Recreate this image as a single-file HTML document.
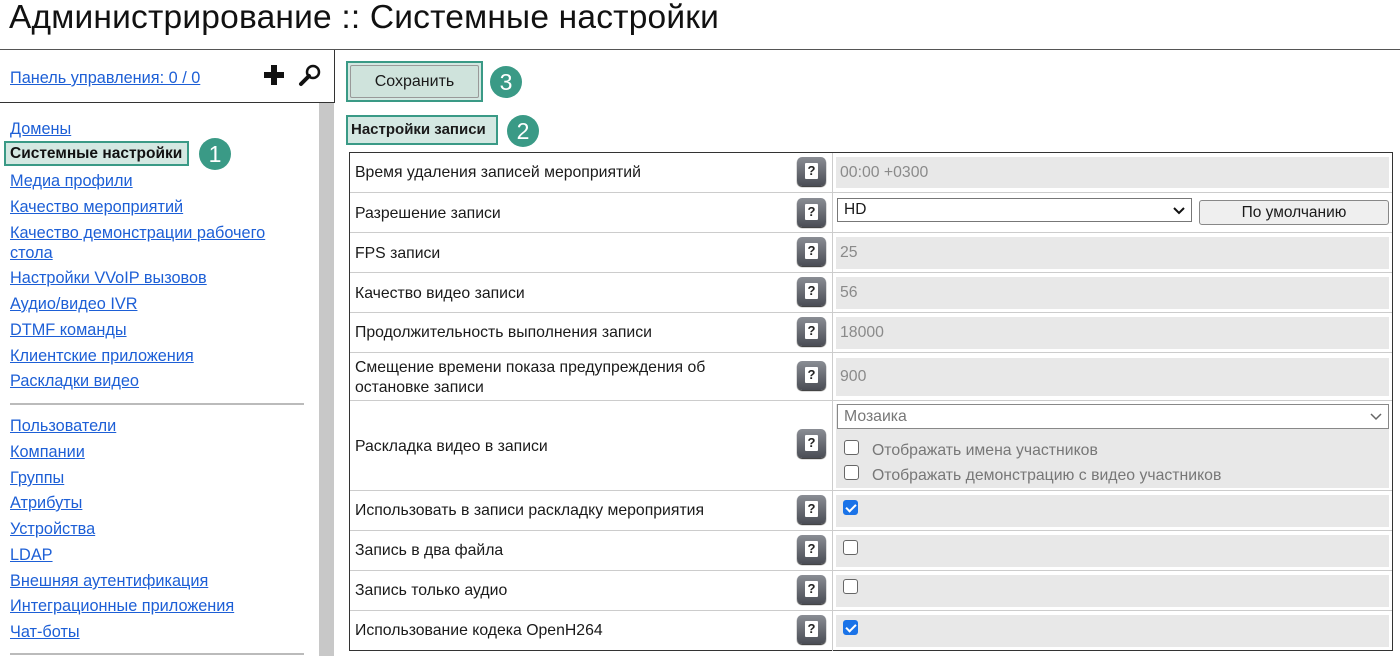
<!DOCTYPE html>
<html><head><meta charset="utf-8"><style>
*{margin:0;padding:0;box-sizing:border-box}
body{width:1400px;height:656px;overflow:hidden;background:#fff;font-family:"Liberation Sans","DejaVu Sans",sans-serif;color:#1a1a1a;position:relative}
.abs{position:absolute}
h1{position:absolute;left:9px;top:-1px;font-size:33.5px;font-weight:normal;color:#111;letter-spacing:0.2px}
a{color:#1d5fd6;text-decoration:underline;font-size:16.3px;white-space:nowrap}
.nav a{position:absolute;left:10px}
.circ{position:absolute;width:32px;height:32px;border-radius:50%;background:#3a9a86;color:#fff;font-size:23px;text-align:center;line-height:32px}
.row{position:absolute;left:350px;width:1042px;border-top:1px solid #ccc}
.lbl{position:absolute;left:5px;font-size:15.8px;line-height:20px}
.q{position:absolute;left:447px;width:29px;height:29px;border-radius:5px;background:linear-gradient(#8a8d94,#4a4d55);box-shadow:0 1px 1px #222}
.q:after{content:"?";position:absolute;left:8px;top:6px;width:13px;height:16px;background:#fff;color:#222;font-size:13px;font-weight:bold;text-align:center;line-height:16px;border-radius:1px}
.vl{position:absolute;left:482px;width:1px;background:#ccc}
.inp{position:absolute;left:486px;width:553px;background:#e8e8e8;color:#8a8a8a;font-size:15.8px;padding-left:4px}
.cb{position:absolute;width:15px;height:15px;border:1px solid #666;border-radius:3px;background:#fff}
.cb.on{background:#1a73e8;border-color:#1a73e8}
.cb.on:after{content:"";position:absolute;left:4px;top:1px;width:4px;height:8px;border:solid #fff;border-width:0 2px 2px 0;transform:rotate(45deg)}
</style></head><body>
<h1>Администрирование :: Системные настройки</h1>
<div class="abs" style="left:0;top:49px;width:1400px;height:1px;background:#555"></div>
<div class="abs" style="left:0;top:50px;width:335px;height:53px;border-right:1px solid #333;border-bottom:1px solid #333"></div>
<a class="abs" style="left:10px;top:69px">Панель управления: 0 / 0</a>
<svg class="abs" style="left:263px;top:64px" width="22" height="22"><path d="M8 1h6v7h7v6h-7v7H8v-7H1V8h7z" fill="#111"/></svg>
<svg class="abs" style="left:298px;top:63px" width="24" height="24"><circle cx="15" cy="9" r="6" fill="none" stroke="#111" stroke-width="2.5"/><path d="M11 13L3 21" stroke="#111" stroke-width="4" stroke-linecap="round"/></svg>
<div class="abs" style="left:319px;top:103px;width:15px;height:553px;background:#c8c8c8"></div>
<div class="nav">
<a style="top:120px">Домены</a>
<div class="abs" style="left:4px;top:141px;width:185px;height:25px;background:#d4e8e2;border:2px solid #3a9a86"></div>
<span class="abs" style="left:10px;top:145px;font-size:15.5px;font-weight:bold;color:#111">Системные настройки</span>
<a style="top:172px">Медиа профили</a>
<a style="top:198px">Качество мероприятий</a>
<a style="top:224px">Качество демонстрации рабочего</a>
<a style="top:244px">стола</a>
<a style="top:269px">Настройки VVoIP вызовов</a>
<a style="top:295px">Аудио/видео IVR</a>
<a style="top:321px">DTMF команды</a>
<a style="top:347px">Клиентские приложения</a>
<a style="top:372px">Раскладки видео</a>
<div class="abs" style="left:10px;top:403px;width:294px;height:2px;background:#bbb"></div>
<a style="top:417px">Пользователи</a>
<a style="top:443px">Компании</a>
<a style="top:469px">Группы</a>
<a style="top:494px">Атрибуты</a>
<a style="top:520px">Устройства</a>
<a style="top:546px">LDAP</a>
<a style="top:572px">Внешняя аутентификация</a>
<a style="top:597px">Интеграционные приложения</a>
<a style="top:623px">Чат-боты</a>
<div class="abs" style="left:10px;top:653px;width:294px;height:2px;background:#bbb"></div>
</div>
<div class="circ" style="left:199px;top:138px">1</div>
<div class="abs" style="left:346px;top:61px;width:137px;height:41px;border:2px solid #3a9a86;background:#d4e8e2"></div>
<div class="abs" style="left:350px;top:65px;width:129px;height:33px;border:1px solid #999;border-radius:2px;background:#cfe3dc;font-size:16px;text-align:center;line-height:32px">Сохранить</div>
<div class="circ" style="left:490px;top:66px">3</div>
<div class="abs" style="left:346px;top:115px;width:152px;height:30px;border:2px solid #3a9a86;background:#d4e8e2;font-size:15px;font-weight:bold;line-height:26px;padding-left:3px">Настройки записи</div>
<div class="circ" style="left:507px;top:115px">2</div>
<div class="abs" style="left:349px;top:152px;width:1044px;height:499px;border:1.5px solid #333"></div>

<div class="row" style="top:153px;height:39px;border-top:none"><span class="lbl" style="top:10px">Время удаления записей мероприятий</span><div class="q" style="top:4px"></div><div class="vl" style="top:0;height:39px"></div><div class="inp" style="top:4px;height:31px;line-height:31px">00:00 +0300</div></div>
<div class="row" style="top:192px;height:40px"><span class="lbl" style="top:11px">Разрешение записи</span><div class="q" style="top:5px"></div><div class="vl" style="top:0;height:40px"></div>
<div class="abs" style="left:487px;top:5px;width:355px;height:24px;border:1px solid #777;background:#fff;font-size:15.5px;line-height:22px;padding-left:6px">HD<svg class="abs" style="right:6px;top:7px" width="12" height="9"><path d="M1 2l5 5 5-5" fill="none" stroke="#111" stroke-width="2"/></svg></div>
<div class="abs" style="left:849px;top:7px;width:190px;height:25px;border:1px solid #888;border-radius:3px;background:#efefef;font-size:15.5px;text-align:center;line-height:23px">По умолчанию</div></div>
<div class="row" style="top:232px;height:40px"><span class="lbl" style="top:11px">FPS записи</span><div class="q" style="top:4px"></div><div class="vl" style="top:0;height:40px"></div><div class="inp" style="top:4px;height:32px;line-height:32px">25</div></div>
<div class="row" style="top:272px;height:40px"><span class="lbl" style="top:11px">Качество видео записи</span><div class="q" style="top:4px"></div><div class="vl" style="top:0;height:40px"></div><div class="inp" style="top:4px;height:32px;line-height:32px">56</div></div>
<div class="row" style="top:312px;height:40px"><span class="lbl" style="top:10px">Продолжительность выполнения записи</span><div class="q" style="top:4px"></div><div class="vl" style="top:0;height:40px"></div><div class="inp" style="top:4px;height:32px;line-height:32px">18000</div></div>
<div class="row" style="top:352px;height:48px"><span class="lbl" style="top:5px">Смещение времени показа предупреждения об<br>остановке записи</span><div class="q" style="top:8px"></div><div class="vl" style="top:0;height:48px"></div><div class="inp" style="top:5px;height:38px;line-height:38px">900</div></div>
<div class="row" style="top:400px;height:90px"><span class="lbl" style="top:36px">Раскладка видео в записи</span><div class="q" style="top:28px"></div><div class="vl" style="top:0;height:90px"></div>
<div class="inp" style="top:3px;height:84px"></div>
<div class="abs" style="left:487px;top:3px;width:552px;height:25px;border:1px solid #888;background:#fff;color:#777;font-size:15.8px;line-height:23px;padding-left:6px">Мозаика<svg class="abs" style="right:6px;top:8px" width="12" height="8"><path d="M1 1l5 5 5-5" fill="none" stroke="#666" stroke-width="1.5"/></svg></div>
<div class="cb" style="left:494px;top:39px"></div><span class="abs" style="left:522px;top:41px;font-size:15.8px;color:#777">Отображать имена участников</span>
<div class="cb" style="left:494px;top:64px"></div><span class="abs" style="left:522px;top:66px;font-size:15.8px;color:#777">Отображать демонстрацию с видео участников</span></div>
<div class="row" style="top:490px;height:40px"><span class="lbl" style="top:10px">Использовать в записи раскладку мероприятия</span><div class="q" style="top:4px"></div><div class="vl" style="top:0;height:40px"></div><div class="inp" style="top:4px;height:32px"></div><div class="cb on" style="left:493px;top:9px"></div></div>
<div class="row" style="top:530px;height:40px"><span class="lbl" style="top:10px">Запись в два файла</span><div class="q" style="top:4px"></div><div class="vl" style="top:0;height:40px"></div><div class="inp" style="top:4px;height:32px"></div><div class="cb" style="left:493px;top:9px"></div></div>
<div class="row" style="top:570px;height:40px"><span class="lbl" style="top:10px">Запись только аудио</span><div class="q" style="top:4px"></div><div class="vl" style="top:0;height:40px"></div><div class="inp" style="top:4px;height:32px"></div><div class="cb" style="left:493px;top:8px"></div></div>
<div class="row" style="top:610px;height:40px"><span class="lbl" style="top:10px">Использование кодека OpenH264</span><div class="q" style="top:4px"></div><div class="vl" style="top:0;height:40px"></div><div class="inp" style="top:4px;height:32px"></div><div class="cb on" style="left:493px;top:9px"></div></div>
</body></html>
